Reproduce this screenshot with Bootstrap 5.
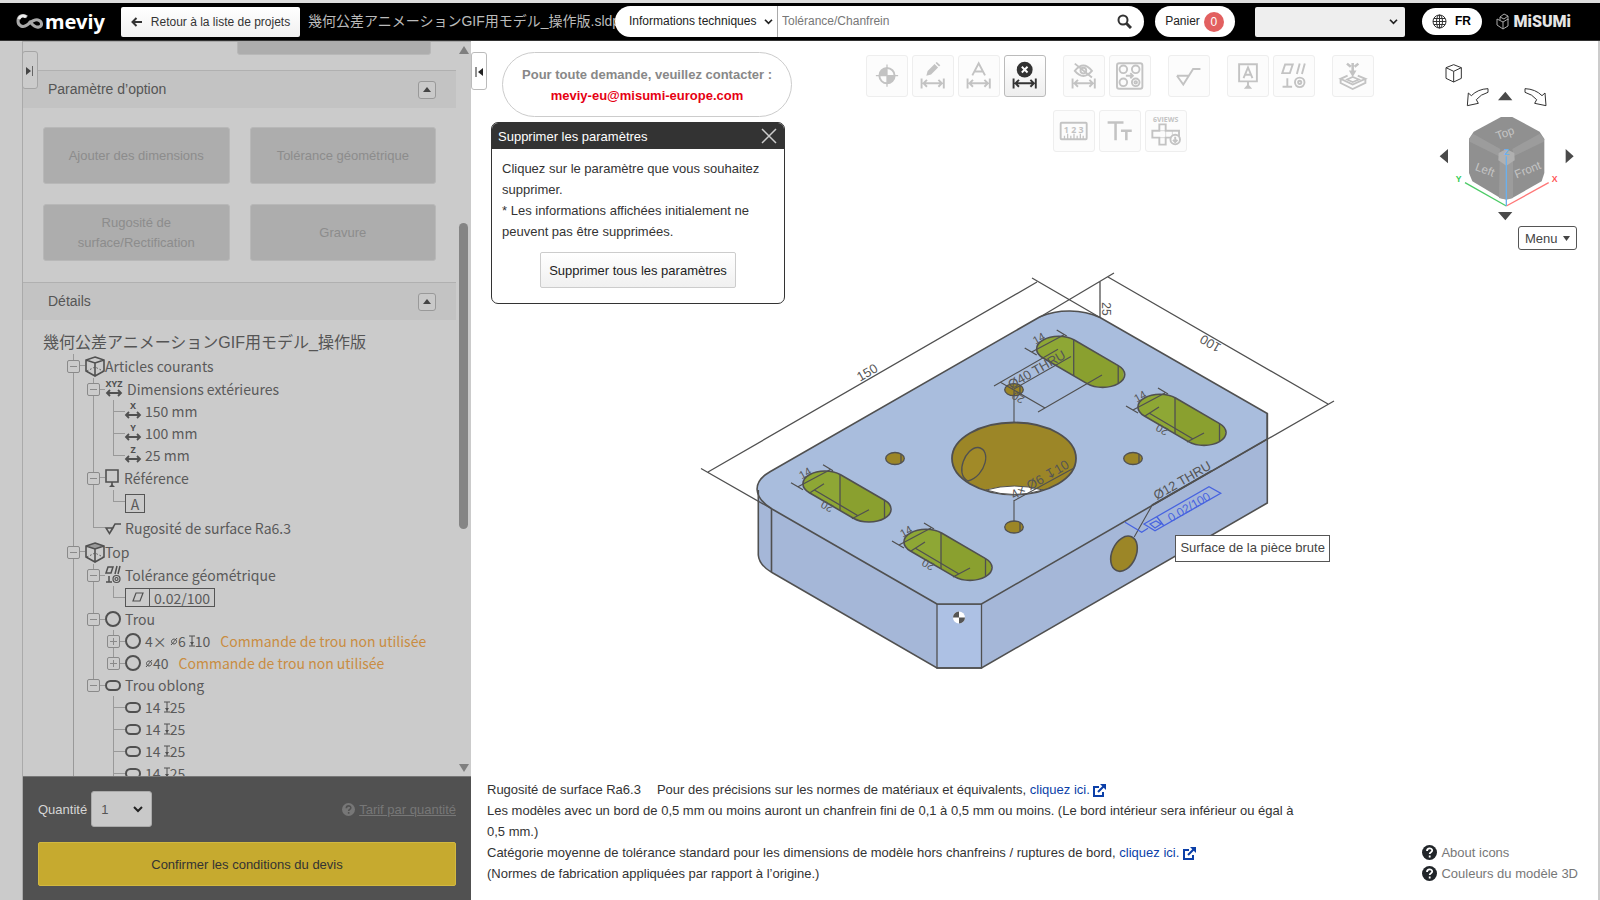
<!DOCTYPE html>
<html lang="fr">
<head>
<meta charset="utf-8">
<meta name="viewport" content="width=device-width, initial-scale=1">
<title>meviy</title>
<link href="https://cdn.jsdelivr.net/npm/bootstrap@5.3.0/dist/css/bootstrap.min.css" rel="stylesheet">
<script src="https://cdn.jsdelivr.net/npm/bootstrap@5.3.0/dist/js/bootstrap.bundle.min.js" defer></script>
<style>
:root { --ui: "Liberation Sans", Arial, "Noto Sans CJK JP", sans-serif; --dim: #cbcbcb; --chev: url("data:image/svg+xml,%3Csvg xmlns='http://www.w3.org/2000/svg' viewBox='0 0 10 8'%3E%3Cpath d='M1 2l4 4 4-4' fill='none' stroke='%23222' stroke-width='2'/%3E%3C/svg%3E"); }
body { font-family: var(--ui); font-size: 13px; line-height: 21px; color: #333; background: #fff; border-top: 3px solid #ddd; }
button, select, input { font-family: inherit; }

/* top bar */
.topbar { background: #000; height: 38px; padding: 0 29px 0 15px; border-bottom: 1px solid #333; }
.brand { color: #fff; font: 700 20px/30px "Noto Sans", sans-serif; width: 106px; }
.back-btn { height: 30px; width: 179px; font-size: 12px; line-height: 16px; background: linear-gradient(#fff, #f0f0f0); border: 0; border-radius: 2px; color: #333; }
.file-name { color: #bbb; font-size: 14px; flex: 0 1 323px; min-width: 0; padding-left: 8px; }
.search { height: 31px; background: #fff; border-radius: 16px; margin-left: -8px; font-size: 12px; }
.search select, .search input { border: 0; outline: 0; font-size: 12px; color: #222; }
.search select { width: 163px; padding: 0 18px 0 14px; border-right: 1px solid #aaa; height: 31px; }
.search input { padding: 0 4px; min-width: 0; background: none; }
.search input::placeholder { color: #777; opacity: 1; }
.chev { appearance: none; background: var(--chev) no-repeat right 4px center / 9px 7px; }
.cart { height: 31px; width: 80px; background: #fff; border: 0; border-radius: 16px; font-size: 12px; color: #222; margin-left: 11px; }
.cart-count { width: 20px; height: 20px; line-height: 20px; border-radius: 50%; background: #e26060; color: #fff; }
.account { width: 150px; height: 30px; border: 0; border-radius: 2px; background-color: #eee; background-position: right 7px center; margin-left: 20px; }
.lang { width: 60px; height: 27px; background: #fff; border: 0; border-radius: 14px; font-weight: 700; font-size: 12px; margin-left: 17px; }
.misumi { color: #e5e5e5; font: 900 16px/20px Roboto, sans-serif; margin-left: 14px; }

/* left panel */
.gutter { width: 22px; background: var(--dim); }
.side { flex: 0 0 449px; background: var(--dim); border-left: 1px solid #aaa; border-top: 1px solid #aaa; min-height: 0; color: #555; }
.side-scroll { min-height: 0; overflow: hidden; }
.cut { height: 13px; overflow: hidden; padding-right: 25px; margin-bottom: 15px; }
.opt-btn { height: 57px; background: #adadad; border: 1px solid #b8b8b8; border-radius: 3px; color: #8c8c8c; font-size: 13px; line-height: 20px; }
.cut .opt-btn { width: 194px; }
.sect { height: 38px; background: #c3c3c3; border-top: 1px solid #b0b0b0; padding: 0 20px 0 25px; font-size: 14px; font-weight: 400; color: #555; margin: 0; }
.fold { width: 18px; height: 18px; border: 1px solid #999; border-radius: 3px; background: #c9c9c9; }
.opt-grid { display: grid; grid-template-columns: 1fr 1fr; gap: 20px; padding: 19px 20px 21px; }
.model-name { font-size: 16px; line-height: 22px; padding: 12px 20px 0; white-space: nowrap; }
.rail { width: 15px; color: #7f7f7f; }
.thumb { width: 9px; height: 306px; margin-top: 169px; border-radius: 5px; background: #858585; }

.tree, .tree ul { list-style: none; margin: 0; padding: 0; font-family: "Noto Sans CJK JP", sans-serif; font-size: 14px; white-space: nowrap; }
.tree { padding-left: 44px; color: #5a5a5a; }
.tree ul { margin-left: 20px; }
.tree li { background: linear-gradient(#999, #999) no-repeat 6px 0 / 1px 100%; }
.tree li.end { background-size: 1px 11px; }
.node { height: 22px; line-height: 22px; display: flex; align-items: center; background: linear-gradient(#999, #999) no-repeat 6px 11px / 12px 1px; }
.node.tall { height: 24px; }
.node.taller { height: 26px; }
.leaf { padding-left: 18px; }
.tog { width: 13px; height: 13px; flex: none; margin-right: 5px; padding: 0; border: 1px solid #8a8a8a; border-radius: 2px; background: linear-gradient(#8a8a8a, #8a8a8a) no-repeat center / 7px 1px, var(--dim); }
.tog.plus { background: linear-gradient(#8a8a8a, #8a8a8a) no-repeat center / 7px 1px, linear-gradient(#8a8a8a, #8a8a8a) no-repeat center / 1px 7px, var(--dim); }
.node svg { flex: none; fill: none; stroke: #505050; stroke-width: 2; overflow: visible; }
.node svg text { fill: #505050; stroke: none; font: 700 9px "Noto Sans", sans-serif; text-anchor: middle; }
.warn { color: #c98d42; margin-left: 10px; }
.framed { border: 1px solid #555; height: 19px; line-height: 18px; }
.framed.w1 { width: 20px; text-align: center; }
.framed.sym { width: 24px; border-right: 0; }

.order { background: #515151; padding: 14px 15px; border-top: 1px solid #777; }
.order label { color: #d6d6d6; }
.qty { width: 61px; height: 36px; border: 1px solid #aaa; border-radius: 3px; background-color: #c9c9c9; background-position: right 8px center; background-size: 10px 8px; color: #555; padding-left: 9px; }
.tarif, .tarif:hover { color: #777; }
.tarif svg { --q: #515151; }
.confirm { height: 44px; margin-top: 15px; background: #c6aa2f; border: 1px solid #d2b840; border-radius: 2px; color: #333; font-size: 13px; }

/* viewer */
.viewer { border-right: 2px solid #ccc; min-width: 0; }
.scene { position: absolute; inset: 0; width: 100%; height: 100%; }
.scene text { font-family: var(--ui); fill: #555; text-anchor: middle; }
.scene text.tol { fill: #4763e0; }
.edge-tab { position: absolute; width: 16px; height: 38px; border: 1px solid #bbb; border-radius: 3px; background: #fff; padding: 0; z-index: 2; }
.edge-tab.l { left: 22px; top: 48px; background: var(--dim); border-color: #a5a5a5; }
.edge-tab.r { left: 0; top: 11px; }
.top-area { padding: 11px 21px 0 20px; }
.contact { width: 290px; height: 65px; border: 1px solid #ccc; border-radius: 33px; font-weight: 700; color: #888; margin-left: 11px; background: #fff; }
.contact a { color: #e60012; text-decoration: none; }
.dlg { width: 294px; border: 1px solid #333; border-radius: 7px; margin-top: 5px; background: #fff; overflow: hidden; }
.dlg header { background: #333; color: #fff; height: 26px; padding: 0 7px 0 6px; }
.dlg .inner { padding: 9px 10px 15px; }
.grad-btn { height: 36px; padding: 0 8px; margin-top: 10px; border: 1px solid #ccc; border-radius: 2px; background: linear-gradient(#fff, #f0f0f0); color: #222; font-size: 13px; }
.tools { row-gap: 13px; column-gap: 17px; padding: 3px 0 0 8px; }
.tool { width: 42px; height: 42px; padding: 0; border: 1px solid #eee; border-radius: 3px; background: #fcfcfc; color: #c3c3c3; }
.tool.on { color: #333; border-color: #bbb; background: linear-gradient(#fff, #eee); }
.tool svg { display: block; width: 40px; height: 40px; fill: none; stroke: currentColor; stroke-width: 6; }
.tool text { fill: currentColor; stroke: none; font-family: "Open Sans", sans-serif; font-weight: 700; text-anchor: middle; }
.view-cube { padding-top: 11px; }
.menu-btn { width: 59px; height: 24px; border: 1px solid #555; border-radius: 3px; background: #fff; color: #444; padding: 0 6px; margin-top: 4px; }
.tip { position: absolute; left: 62.5%; top: 57.5%; border: 1px solid #555; background: #fff; color: #444; height: 27px; line-height: 23px; padding: 0 4px; white-space: nowrap; }
.bottom-area { padding: 0 20px 16px 16px; }
.notes { max-width: 74%; }
.notes a { color: #0b3fa8; text-decoration: none; }
.help a { color: #777; text-decoration: none; }
</style>
</head>
<body class="vh-100 d-flex flex-column overflow-hidden position-relative">

<svg width="0" height="0" class="position-absolute" aria-hidden="true">
  <defs>
    <g id="i-cube"><path d="M10 1l9 3v11l-9 5-9-5V4zM1 4l9 3 9-3M10 7v13" stroke-width="1.6"/><path d="M2 15l8-4 8 4" stroke-dasharray="1.5 2" stroke-width="1"/></g>
    <g id="i-arr"><path d="M1 0h14M4-3L1 0l3 3M12-3l3 3-3 3" stroke-width="1.8"/></g>
    <g id="i-depth"><path d="M0 1h6M3 1v10M0 11h6" stroke-width="1"/><path d="M1 7h4L3 10z" fill="#505050" stroke="none"/></g>
    <g id="i-slot"><rect x="1" y="1" width="14" height="9" rx="4.5"/></g>
    <g id="i-circ"><circle cx="8" cy="8" r="7"/></g>
    <g id="i-dim"><path d="M27 71v31M97 71v31M32 86h60M44 75L33 86l11 11M80 75l11 11-11 11"/></g>
    <g id="i-help"><circle cx="7.5" cy="7.5" r="7.5" fill="currentColor"/><path d="M5 6c0-3.600 5.200-3.300 5.200-.5 0 1.800-2.500 1.700-2.500 3.600M7.700 10.500v2" fill="none" stroke="var(--q, #fff)" stroke-width="1.8"/></g>
    <g id="i-ext"><path d="M6 3H1v9h9V8M5 8l6-6" fill="none" stroke="#0b3fa8" stroke-width="2"/><path d="M7 0h6v6z" fill="#0b3fa8"/></g>
  </defs>
</svg>

<nav class="topbar d-flex align-items-center flex-shrink-0">
  <a href="#" class="brand d-flex align-items-center text-decoration-none">
    <svg width="30" height="18" viewBox="0 0 30 18" fill="none" stroke="#a9a9a9" stroke-width="3"><path d="M12 4C8 1 3 3 3 8s5 7 9 4 7-6 11-5 5 6 1 7-6-2-10-6"/><path d="M11 4C8 2 5 3 4 6" stroke="#eee"/></svg>
    <span>meviy</span>
  </a>
  <button class="back-btn d-flex align-items-center justify-content-center gap-2" type="button">
    <svg width="12" height="10" viewBox="0 0 12 10" fill="none" stroke="#333" stroke-width="2"><path d="M11 5H2M5.500 1 1.500 5l4 4"/></svg>Retour à la liste de projets
  </button>
  <div class="file-name text-nowrap overflow-hidden">幾何公差アニメーションGIF用モデル_操作版.sldprt</div>
  <form class="search d-flex align-items-center flex-fill position-relative overflow-hidden">
    <select class="chev" aria-label="Catégorie"><option>Informations techniques</option></select>
    <input class="flex-fill" type="text" placeholder="Tolérance/Chanfrein" aria-label="Recherche">
    <button class="border-0 bg-transparent p-0 me-2 pe-1" type="button" aria-label="Rechercher"><svg width="15" height="15" viewBox="0 0 15 15" fill="none" stroke="#333" stroke-width="2"><circle cx="6" cy="6" r="4.500"/><path d="m9.500 9.500 4.500 4.500" stroke-width="3"/></svg></button>
  </form>
  <button class="cart d-flex align-items-center justify-content-center gap-1" type="button">Panier <span class="cart-count">0</span></button>
  <select class="account chev" aria-label="Compte"><option></option></select>
  <button class="lang d-flex align-items-center justify-content-center gap-2" type="button"><svg width="15" height="15" viewBox="0 0 15 15" fill="none" stroke="#333"><circle cx="7.500" cy="7.500" r="6.500"/><ellipse cx="7.500" cy="7.500" rx="3" ry="6.500"/><path d="M7.500 1v13M1 7.500h13M2 4.500h11M2 10.500h11"/></svg>FR</button>
  <a href="#" class="misumi d-flex align-items-center gap-1 text-decoration-none"><svg width="14" height="17" viewBox="0 0 14 17" fill="none" stroke="#aaa"><path d="M1 6l6 3v7l-6-4zM7 9l5-3v7l-5 3M4 4l4-3 4 2-4 3zM4 4v3M12 3v4"/></svg>MiSUMi</a>
</nav>

<button class="edge-tab l" type="button" aria-label="Déplier"><svg width="8" height="10" viewBox="0 0 8 10"><path d="M0 1l5 4-5 4z" fill="#444"/><path d="M6.500 0v10" stroke="#666"/></svg></button>

<div class="d-flex flex-fill overflow-hidden">
  <div class="gutter flex-shrink-0"></div>

  <aside class="side d-flex flex-column">
    <div class="side-scroll d-flex flex-fill">
      <div class="flex-fill">
        <div class="cut d-flex justify-content-end align-items-end"><button class="opt-btn flex-shrink-0" type="button" disabled aria-label="Option"></button></div>
        <h2 class="sect d-flex justify-content-between align-items-center">Paramètre d’option <button class="fold p-0 d-flex align-items-center justify-content-center" type="button" aria-label="Replier"><svg width="8" height="5"><path d="M0 5l4-5 4 5z" fill="#444"/></svg></button></h2>
        <div class="opt-grid">
          <button class="opt-btn" type="button" disabled>Ajouter des dimensions</button>
          <button class="opt-btn" type="button" disabled>Tolérance géométrique</button>
          <button class="opt-btn" type="button" disabled>Rugosité de surface/Rectification</button>
          <button class="opt-btn" type="button" disabled>Gravure</button>
        </div>
        <h2 class="sect d-flex justify-content-between align-items-center">Détails <button class="fold p-0 d-flex align-items-center justify-content-center" type="button" aria-label="Replier"><svg width="8" height="5"><path d="M0 5l4-5 4 5z" fill="#444"/></svg></button></h2>
        <div class="model-name">幾何公差アニメーションGIF用モデル_操作版</div>

        <ul class="tree">
          <li>
            <div class="node tall"><button class="tog" type="button" aria-label="Replier"></button><svg width="20" height="21"><use href="#i-cube"/></svg>Articles courants</div>
            <ul>
              <li>
                <div class="node"><button class="tog" type="button" aria-label="Replier"></button><svg class="me-1" width="18" height="20"><text x="9" y="8">XYZ</text><use href="#i-arr" x="1" y="14"/></svg>Dimensions extérieures</div>
                <ul>
                  <li><div class="node leaf"><svg class="me-1" width="16" height="20"><text x="8" y="8">X</text><use href="#i-arr" y="14"/></svg>150 mm</div></li>
                  <li><div class="node leaf"><svg class="me-1" width="16" height="20"><text x="8" y="8">Y</text><use href="#i-arr" y="14"/></svg>100 mm</div></li>
                  <li class="end"><div class="node leaf"><svg class="me-1" width="16" height="20"><text x="8" y="8">Z</text><use href="#i-arr" y="14"/></svg>25 mm</div></li>
                </ul>
              </li>
              <li>
                <div class="node tall"><button class="tog" type="button" aria-label="Replier"></button><svg class="me-1" width="15" height="18"><path d="M1 1h12v12H1zM7 13v3" stroke-width="1.6"/><path d="M4 18l3-3 3 3z" fill="#505050" stroke="none"/></svg>Référence</div>
                <ul><li class="end"><div class="node taller leaf"><span class="framed w1">A</span></div></li></ul>
              </li>
              <li class="end"><div class="node tall leaf"><svg class="me-1" width="16" height="13"><path d="M1 6h7L4.500 11.500zM4.500 11.500L10 2h6" stroke-width="1.5"/></svg>Rugosité de surface Ra6.3</div></li>
            </ul>
          </li>
          <li>
            <div class="node tall"><button class="tog" type="button" aria-label="Replier"></button><svg width="20" height="21"><path d="M1 4l9-3 9 3-9 3z" fill="#9a9a9a" stroke="none"/><use href="#i-cube"/></svg>Top</div>
            <ul>
              <li>
                <div class="node"><button class="tog" type="button" aria-label="Replier"></button><svg class="me-1" width="16" height="18"><path d="M3 1h5L6 7H1zM12 0l-2 8M15 0l-2 8M1 16h6M4 10v6" stroke-width="1.5"/><circle cx="11.500" cy="13" r="3.500" stroke-width="1.2"/><circle cx="11.500" cy="13" r="1.500" stroke-width="1.2"/></svg>Tolérance géométrique</div>
                <ul><li class="end"><div class="node leaf"><span class="framed sym d-flex align-items-center justify-content-center"><svg width="12" height="10"><path d="M4 1h7L8 9H1z" stroke-width="1.2"/></svg></span><span class="framed px-1">0.02/100</span></div></li></ul>
              </li>
              <li>
                <div class="node"><button class="tog" type="button" aria-label="Replier"></button><svg class="me-1" width="16" height="16"><use href="#i-circ"/></svg>Trou</div>
                <ul>
                  <li><div class="node"><button class="tog plus" type="button" aria-label="Déplier"></button><svg class="me-1" width="16" height="16"><use href="#i-circ"/></svg>4×&nbsp;<svg width="8" height="9"><path d="M1 8l6-7M4 2a2.500 2.500 0 1 0 .1 0" stroke-width="1"/></svg>6&nbsp;<svg width="6" height="12"><use href="#i-depth"/></svg>10<span class="warn">Commande de trou non utilisée</span></div></li>
                  <li class="end"><div class="node"><button class="tog plus" type="button" aria-label="Déplier"></button><svg class="me-1" width="16" height="16"><use href="#i-circ"/></svg><svg width="8" height="9"><path d="M1 8l6-7M4 2a2.500 2.500 0 1 0 .1 0" stroke-width="1"/></svg>40<span class="warn">Commande de trou non utilisée</span></div></li>
                </ul>
              </li>
              <li class="end">
                <div class="node"><button class="tog" type="button" aria-label="Replier"></button><svg class="me-1" width="16" height="11"><use href="#i-slot"/></svg>Trou oblong</div>
                <ul>
                  <li><div class="node leaf"><svg class="me-1" width="16" height="11"><use href="#i-slot"/></svg>14&nbsp;<svg width="6" height="12"><use href="#i-depth"/></svg>25</div></li>
                  <li><div class="node leaf"><svg class="me-1" width="16" height="11"><use href="#i-slot"/></svg>14&nbsp;<svg width="6" height="12"><use href="#i-depth"/></svg>25</div></li>
                  <li><div class="node leaf"><svg class="me-1" width="16" height="11"><use href="#i-slot"/></svg>14&nbsp;<svg width="6" height="12"><use href="#i-depth"/></svg>25</div></li>
                  <li><div class="node leaf"><svg class="me-1" width="16" height="11"><use href="#i-slot"/></svg>14&nbsp;<svg width="6" height="12"><use href="#i-depth"/></svg>25</div></li>
                </ul>
              </li>
            </ul>
          </li>
        </ul>
      </div>
      <div class="rail d-flex flex-column align-items-center flex-shrink-0">
        <svg class="mt-1" width="10" height="8"><path d="M0 8l5-8 5 8z" fill="currentColor"/></svg>
        <div class="thumb flex-shrink-0"></div>
        <svg class="mt-auto mb-1" width="10" height="8"><path d="M0 0l5 8 5-8z" fill="currentColor"/></svg>
      </div>
    </div>
    <div class="order flex-shrink-0">
      <div class="d-flex align-items-center">
        <label for="qty">Quantité</label>
        <select id="qty" class="qty chev ms-1"><option>1</option></select>
        <a href="#" class="tarif ms-auto d-flex align-items-center gap-1"><svg width="13" height="13" viewBox="0 0 15 15"><use href="#i-help"/></svg>Tarif par quantité</a>
      </div>
      <button class="confirm w-100" type="button">Confirmer les conditions du devis</button>
    </div>
  </aside>

  <main class="viewer flex-fill d-flex flex-column position-relative">
    <svg class="scene" viewBox="471 41 1127 859" fill="none" stroke="#505050" stroke-width="1.3" role="img" aria-label="Modèle 3D">
      <defs>
        <clipPath id="slot-clip"><path d="M15.600-9l44 25.600A22 12.700 0 0 1 28.400 34.600L-15.600 9A22 12.700 0 0 1 15.600-9z"/></clipPath>
        <g id="slot">
          <g clip-path="url(#slot-clip)"><path d="M-25-15h90v55h-90z" fill="#8aa02f" stroke="none"/><path d="M-25-15H15v55h-40z" fill="#8ea735" stroke="none"/><path d="M15-15v55M59.500 0v40"/></g>
          <path d="M15.600-9l44 25.600A22 12.700 0 0 1 28.400 34.600L-15.600 9A22 12.700 0 0 1 15.600-9z" stroke-width="1.600"/>
          <path d="M-34-1l12 7M-2-19l10 6M-27 3L5-14"/>
          <text x="-19" y="-7" font-size="11" stroke="none" transform="rotate(-30 -19 -9)">14</text>
        </g>
        <g id="slot20"><path d="M-11 6l44 26M-15 9l14-9M27 35l17-9"/><text x="2" y="27" font-size="11" stroke="none" transform="rotate(210 2 23)">20</text></g>
      </defs>
      <path d="M758 490V555Q759 565 772 572L937 668H981.500L1267.300 503V413.500L1100 317.500z" fill="#a5b7d8" stroke="none"/>
      <path d="M937 604h44.500v64H937z" fill="#adc1e4"/>
      <path d="M937 604L772 509C753 497 752 482 770 471.700L1040 316.700C1058 309 1082 309 1100 317.500L1267.300 413.500V439L981.500 604z" fill="#a9bddd" stroke-width="1.600"/>
      <path d="M758.300 490V555Q759 565 772 572.500L937 668H981.500L1267.300 503V413.500M771.500 509v63" stroke-width="1.600"/>
      <g fill="#9c8627">
        <ellipse cx="1014" cy="458.500" rx="62" ry="36" stroke-width="1.800"/>
        <path d="M986 490Q1014 482 1043 490Q1014 499 986 490z" fill="#fff" stroke-width="1"/>
        <path d="M968 481C954 474 966 447 978 447.500C992 449 986 476 968 481z" fill="#a18a28"/>
        <ellipse cx="895" cy="458.500" rx="9.300" ry="6"/><ellipse cx="1014" cy="389.700" rx="9.300" ry="6"/><ellipse cx="1014" cy="527" rx="9.300" ry="6"/><ellipse cx="1133" cy="458.500" rx="9.300" ry="6"/>
        <ellipse cx="1124" cy="553.700" rx="12" ry="18.500" transform="rotate(24 1124 553.700)" stroke-width="1.600"/>
        <path d="M901 454v9M1020 385v9M1020 522v9M1139 454v9" fill="none"/>
      </g>
      <use href="#slot" x="825" y="483.700"/><use href="#slot20" x="825" y="483.700"/>
      <use href="#slot" x="926" y="542"/><use href="#slot20" x="926" y="542"/>
      <use href="#slot" x="1058.700" y="349"/>
      <use href="#slot" x="1160" y="407"/><use href="#slot20" x="1160" y="407"/>
      <path d="M708 472L1037 282M701 468.500L772 509M1032 278l68 39.500M1108 277l220 127M1114 273L1040 317M1334 401L1153 505M1100 281v36"/>
      <path d="M994 386l64-36.700M1014 389l57-32.500M1000 382l45 26M1038 412l64-37M1014 390v32M1014 500.700l60-32.700M1014 500v22M1151.700 505l60-34.500M1151.700 506l-17.500 31" stroke-width="1.100"/>
      <g stroke="none">
        <text x="867" y="377" font-size="13" transform="rotate(-30 867 372)">150</text>
        <text x="1210" y="349" font-size="13" transform="rotate(210 1210 344)">100</text>
        <text x="1106" y="313" font-size="12" transform="rotate(90 1106 309)">25</text>
        <text x="1037" y="374" font-size="13" transform="rotate(-30 1037 370)">Ø40 THRU</text>
        <text x="1018" y="402" font-size="11" transform="rotate(210 1018 398)">20</text>
        <text x="1040" y="484" font-size="13" transform="rotate(-30 1040 480)">4× Ø6 ↧10</text>
        <text x="1182" y="485" font-size="13" transform="rotate(-30 1182 480)">Ø12 THRU</text>
        <text class="tol" x="1189" y="511" font-size="12" transform="rotate(-30 1189 507)">0.02/100</text>
      </g>
      <path d="M1144 524l65-37.300 11.700 6.600L1155 530.700zM1125 522.300l16.700 10 6.300-4M1157 517l7 9M1150 524l6-3 5 3-6 4z" stroke="#4763e0"/>
      <g stroke="none"><circle cx="959" cy="617.500" r="6" fill="#fff"/><path d="M959 617.500v-6a6 6 0 0 0-6 6zM959 617.500v6a6 6 0 0 0 6-6z" fill="#555"/></g>
    </svg>
    <div class="tip" role="tooltip">Surface de la pièce brute</div>
    <button class="edge-tab r" type="button" aria-label="Replier"><svg width="8" height="10" viewBox="0 0 8 10"><path d="M8 1L3 5l5 4z" fill="#222"/><path d="M1 0v10" stroke="#222"/></svg></button>

    <div class="top-area d-flex position-relative">
      <div class="flex-shrink-0">
        <div class="contact d-flex flex-column align-items-center justify-content-center"><span>Pour toute demande, veuillez contacter :</span><a href="#">meviy-eu@misumi-europe.com</a></div>
        <section class="dlg">
          <header class="d-flex align-items-center justify-content-between">Supprimer les paramètres <button class="border-0 bg-transparent p-0 d-flex" type="button" aria-label="Fermer"><svg width="16" height="16" stroke="#ccc" stroke-width="1.5"><path d="M1 1l14 14M15 1L1 15"/></svg></button></header>
          <div class="inner">
            <div>Cliquez sur le paramètre que vous souhaitez supprimer.</div>
            <div>* Les informations affichées initialement ne peuvent pas être supprimées.</div>
            <div class="text-center"><button class="grad-btn" type="button">Supprimer tous les paramètres</button></div>
          </div>
        </section>
      </div>

      <div class="tools flex-fill d-flex flex-wrap justify-content-center align-content-start">
        <div class="d-flex gap-1">
          <button class="tool" type="button" aria-label="Origine"><svg viewBox="0 0 126 126"><circle cx="63" cy="62" r="24"/><path d="M63 62V38a24 24 0 0 0-24 24zM63 62v24a24 24 0 0 0 24-24z" fill="currentColor" stroke="none"/><path d="M63 27v70M28 62h70" stroke-width="4"/></svg></button>
          <button class="tool" type="button" aria-label="Modifier"><svg viewBox="0 0 126 126"><path d="M42 62l4-15 22-22 11 11-22 22zM71 22l4-3 11 10-4 4z" fill="currentColor" stroke="none"/><use href="#i-dim"/></svg></button>
          <button class="tool" type="button" aria-label="Texte de cote"><svg viewBox="0 0 126 126"><path d="M42 61l20-38 20 38M50 49h24"/><use href="#i-dim"/></svg></button>
          <button class="tool on" type="button" aria-label="Supprimer"><svg viewBox="0 0 126 126"><circle cx="62" cy="43" r="25" fill="currentColor" stroke="none"/><path d="M53 34l18 18M71 34L53 52" stroke="#fff"/><use href="#i-dim"/></svg></button>
        </div>
        <div class="d-flex gap-1">
          <button class="tool" type="button" aria-label="Masquer"><svg viewBox="0 0 126 126"><path d="M34 47q27-34 54 0-27 32-54 0zM34 24l54 44"/><circle cx="61" cy="46" r="9"/><use href="#i-dim"/></svg></button>
          <button class="tool" type="button" aria-label="Copier"><svg viewBox="0 0 126 126"><rect x="22" y="23" width="80" height="80" rx="7"/><circle cx="42" cy="42" r="12"/><circle cx="81" cy="42" r="12"/><circle cx="42" cy="83" r="12"/><circle cx="81" cy="83" r="12"/><circle cx="81" cy="83" r="4"/><path d="M50 62h22M64 54l8 8-8 8"/></svg></button>
        </div>
        <button class="tool" type="button" aria-label="Rugosité"><svg viewBox="0 0 126 126"><path d="M25 62h36M25 62l20 28 31-49h23"/></svg></button>
        <div class="d-flex gap-1">
          <button class="tool" type="button" aria-label="Référence"><svg viewBox="0 0 126 126"><path d="M35 26h56v54H35zM63 80v16"/><path d="M50 103l13-15 13 15z" fill="currentColor" stroke="none"/><path d="M49 70l14-34 14 34M54 59h18"/></svg></button>
          <button class="tool" type="button" aria-label="Tolérance géométrique"><svg viewBox="0 0 126 126"><path d="M35 27h24l-9 27H26zM81 24l-9 33M97 24l-9 33M27 97h30M42 70v27"/><circle cx="81" cy="83" r="15"/><circle cx="81" cy="83" r="5"/></svg></button>
        </div>
        <button class="tool" type="button" aria-label="Gravure"><svg viewBox="0 0 126 126"><path d="M46 62L24 72l38 18 40-18-24-10M24 72v13l38 19 40-19V72"/><path d="M44 74l18-8 20 8-20 8z" stroke-width="5"/><path d="M50 46h24l-12 20z" fill="currentColor" stroke="none"/><path d="M62 22v28M44 24l12 10M80 24L68 34" stroke-width="8"/></svg></button>
        <div class="d-flex gap-1">
          <button class="tool" type="button" aria-label="Mesure"><svg viewBox="0 0 126 126"><rect x="21" y="37" width="82" height="52" rx="3"/><text x="62" y="68" font-size="28">1 2 3</text><path d="M33 88v-10M43 88V72M53 88v-10M63 88V72M73 88v-10M83 88V72M92 88v-10" stroke-width="4"/></svg></button>
          <button class="tool" type="button" aria-label="Taille du texte"><svg viewBox="0 0 126 126"><path d="M24 36h50M49 36v56M66 62h34M83 62v30" stroke-width="8"/></svg></button>
          <button class="tool" type="button" aria-label="Six vues"><svg viewBox="0 0 126 126"><text x="62" y="35" font-size="22">6VIEWS</text><path d="M42 42h20v20h42v22H62v22H42V84H20V62h22z"/><path d="M42 62h20v22H42M83 62v22" stroke-width="2"/><circle cx="92" cy="90" r="15" fill="#fcfcfc"/><path d="M92 81v16M85 91l7 7 7-7"/></svg></button>
        </div>
      </div>

      <div class="view-cube d-flex flex-column align-items-end flex-shrink-0">
        <svg width="138" height="159" viewBox="118 70 414 477" fill="none" stroke="#333" stroke-width="4" role="img" aria-label="Orientation">
          <path d="M139 84l23-9 23 9v32l-23 11-23-11zM139 84l23 11 23-11M162 95v32" stroke-width="3"/>
          <path d="M265 147v11q-22 6-35 22l6 11-33 7 3-38 9 8q20-20 50-21zM376 147v11q22 6 35 22l-6 11 34 7-3-38-9 8q-20-20-51-21z" stroke-width="3"/>
          <path d="M295 182l22-26 21 26zM295 517h43l-21 25zM145 328v43l-25-21zM498 328v43l24-21z" fill="#4a4a4a" stroke="none"/>
          <g stroke="none"><path d="M208 298l14-22 82-44h34l82 44 14 22v102l-8 25-88 50-18 4-18-4-84-50-10-25z" fill="#909090"/><path d="M208 298l12-16 82 46-4 22-88-44zM434 298l-14-16-82 46 4 22 90-44zM300 365l-2 110 22 5 20-5v-110z" fill="#9c9c9c"/><path d="M320 328l24 12 1 22-25 16-24-16 1-22z" fill="#b0b0b0"/></g>
          <g stroke="none" fill="#c4c4c4" font-family="Liberation Sans, sans-serif" font-size="35" text-anchor="middle"><text x="316" y="292" transform="rotate(-20 316 280)">Top</text><text x="256" y="402" transform="rotate(20 256 390)">Left</text><text x="384" y="402" transform="rotate(-22 384 390)">Front</text></g>
          <path d="M320 499L196 429" stroke="#4ccb66"/><path d="M320 499l127-70" stroke="#f77"/><path d="M320 499V350" stroke="#6ab0ee"/>
          <g stroke="none" font-family="Liberation Sans, sans-serif" font-weight="700" font-size="26" text-anchor="middle"><text x="177" y="426" fill="#3c5">Y</text><text x="465" y="428" fill="#f55">X</text><text x="321" y="345" fill="#6ab0ee">Z</text></g>
        </svg>
        <button class="menu-btn d-flex align-items-center justify-content-between" type="button">Menu <svg width="7" height="5"><path d="M0 0h7L3.500 5z" fill="#444"/></svg></button>
      </div>
    </div>

    <div class="bottom-area mt-auto d-flex justify-content-between align-items-end position-relative">
      <div class="notes">
        <div>Rugosité de surface Ra6.3<span class="ms-3">Pour des précisions sur les normes de matériaux et équivalents,</span> <a href="#">cliquez ici. <svg width="13" height="13"><use href="#i-ext"/></svg></a></div>
        <div>Les modèles avec un bord de 0,5 mm ou moins auront un chanfrein fini de 0,1 à 0,5 mm ou moins. (Le bord intérieur sera inférieur ou égal à 0,5 mm.)</div>
        <div>Catégorie moyenne de tolérance standard pour les dimensions de modèle hors chanfreins / ruptures de bord, <a href="#">cliquez ici. <svg width="13" height="13"><use href="#i-ext"/></svg></a></div>
        <div>(Normes de fabrication appliquées par rapport à l’origine.)</div>
      </div>
      <div class="help">
        <a href="#" class="d-flex align-items-center"><svg class="me-1 text-dark" width="15" height="15"><use href="#i-help"/></svg>About icons</a>
        <a href="#" class="d-flex align-items-center"><svg class="me-1 text-dark" width="15" height="15"><use href="#i-help"/></svg>Couleurs du modèle 3D</a>
      </div>
    </div>
  </main>
</div>
</body>
</html>
